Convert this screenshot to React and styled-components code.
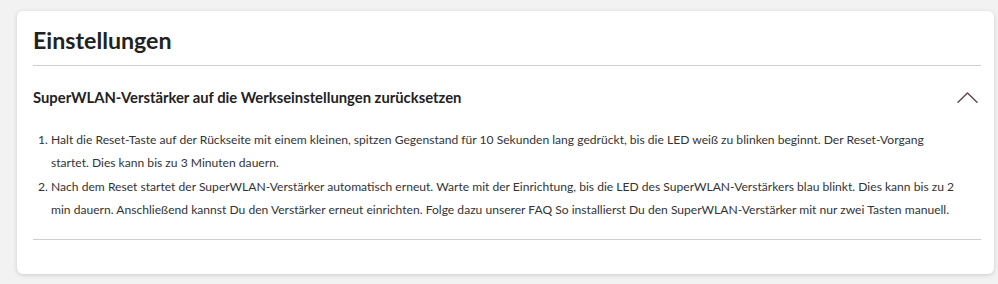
import React from "react";
import styled, { createGlobalStyle } from "styled-components";

const GlobalStyle = createGlobalStyle`
  html, body {
    margin: 0;
    padding: 0;
    background: #f2f2f2;
  }
  body {
    font-family: Lato, "Open Sans", sans-serif;
    color: #333333;
  }
`;

const Page = styled.div`
  padding: 11px 4px 11px 17px;
`;

const Card = styled.section`
  background: #ffffff;
  border-radius: 6px;
  box-shadow: 0 1px 4px rgba(0, 0, 0, 0.16);
  padding: 15px 13px 34px 16px;
`;

const Title = styled.h2`
  margin: 0;
  font-size: 23.2px;
  line-height: 29px;
  font-weight: 700;
  color: #222222;
  padding-bottom: 10px;
  border-bottom: 1px solid #cfcfcf;
`;

const Section = styled.div`
  border-bottom: 1px solid #cfcfcf;
  padding-bottom: 18px;
`;

const Header = styled.div`
  display: flex;
  align-items: center;
  justify-content: space-between;
  padding: 21px 3px 21px 0;
`;

const Heading = styled.h3`
  margin: 0;
  font-size: 14.8px;
  line-height: 20px;
  font-weight: 700;
  color: #222222;
`;

const Chevron = styled.svg`
  width: 21px;
  height: 11px;
  display: block;
`;

const Steps = styled.ol`
  margin: 0;
  padding: 0 21px 0 18px;
  font-size: 12.1px;
  line-height: 23px;
  color: #333333;
`;

const Step = styled.li`
  & + & {
    margin-top: 1px;
  }
`;

const steps = [
  "Halt die Reset-Taste auf der Rückseite mit einem kleinen, spitzen Gegenstand für 10 Sekunden lang gedrückt, bis die LED weiß zu blinken beginnt. Der Reset-Vorgang startet. Dies kann bis zu 3 Minuten dauern.",
  "Nach dem Reset startet der SuperWLAN-Verstärker automatisch erneut. Warte mit der Einrichtung, bis die LED des SuperWLAN-Verstärkers blau blinkt. Dies kann bis zu 2 min dauern. Anschließend kannst Du den Verstärker erneut einrichten. Folge dazu unserer FAQ So installierst Du den SuperWLAN-Verstärker mit nur zwei Tasten manuell.",
];

export default function App() {
  return (
    <>
      <GlobalStyle />
      <Page>
        <Card>
          <Title>Einstellungen</Title>
          <Section>
            <Header>
              <Heading>SuperWLAN-Verstärker auf die Werkseinstellungen zurücksetzen</Heading>
              <Chevron viewBox="0 0 21 11" fill="none">
                <polyline
                  points="1,10.2 10.5,1 20,10.2"
                  stroke="#5a4548"
                  strokeWidth="1.4"
                  strokeLinecap="round"
                  strokeLinejoin="round"
                />
              </Chevron>
            </Header>
            <Steps>
              {steps.map((s, i) => (
                <Step key={i}>{s}</Step>
              ))}
            </Steps>
          </Section>
        </Card>
      </Page>
    </>
  );
}
